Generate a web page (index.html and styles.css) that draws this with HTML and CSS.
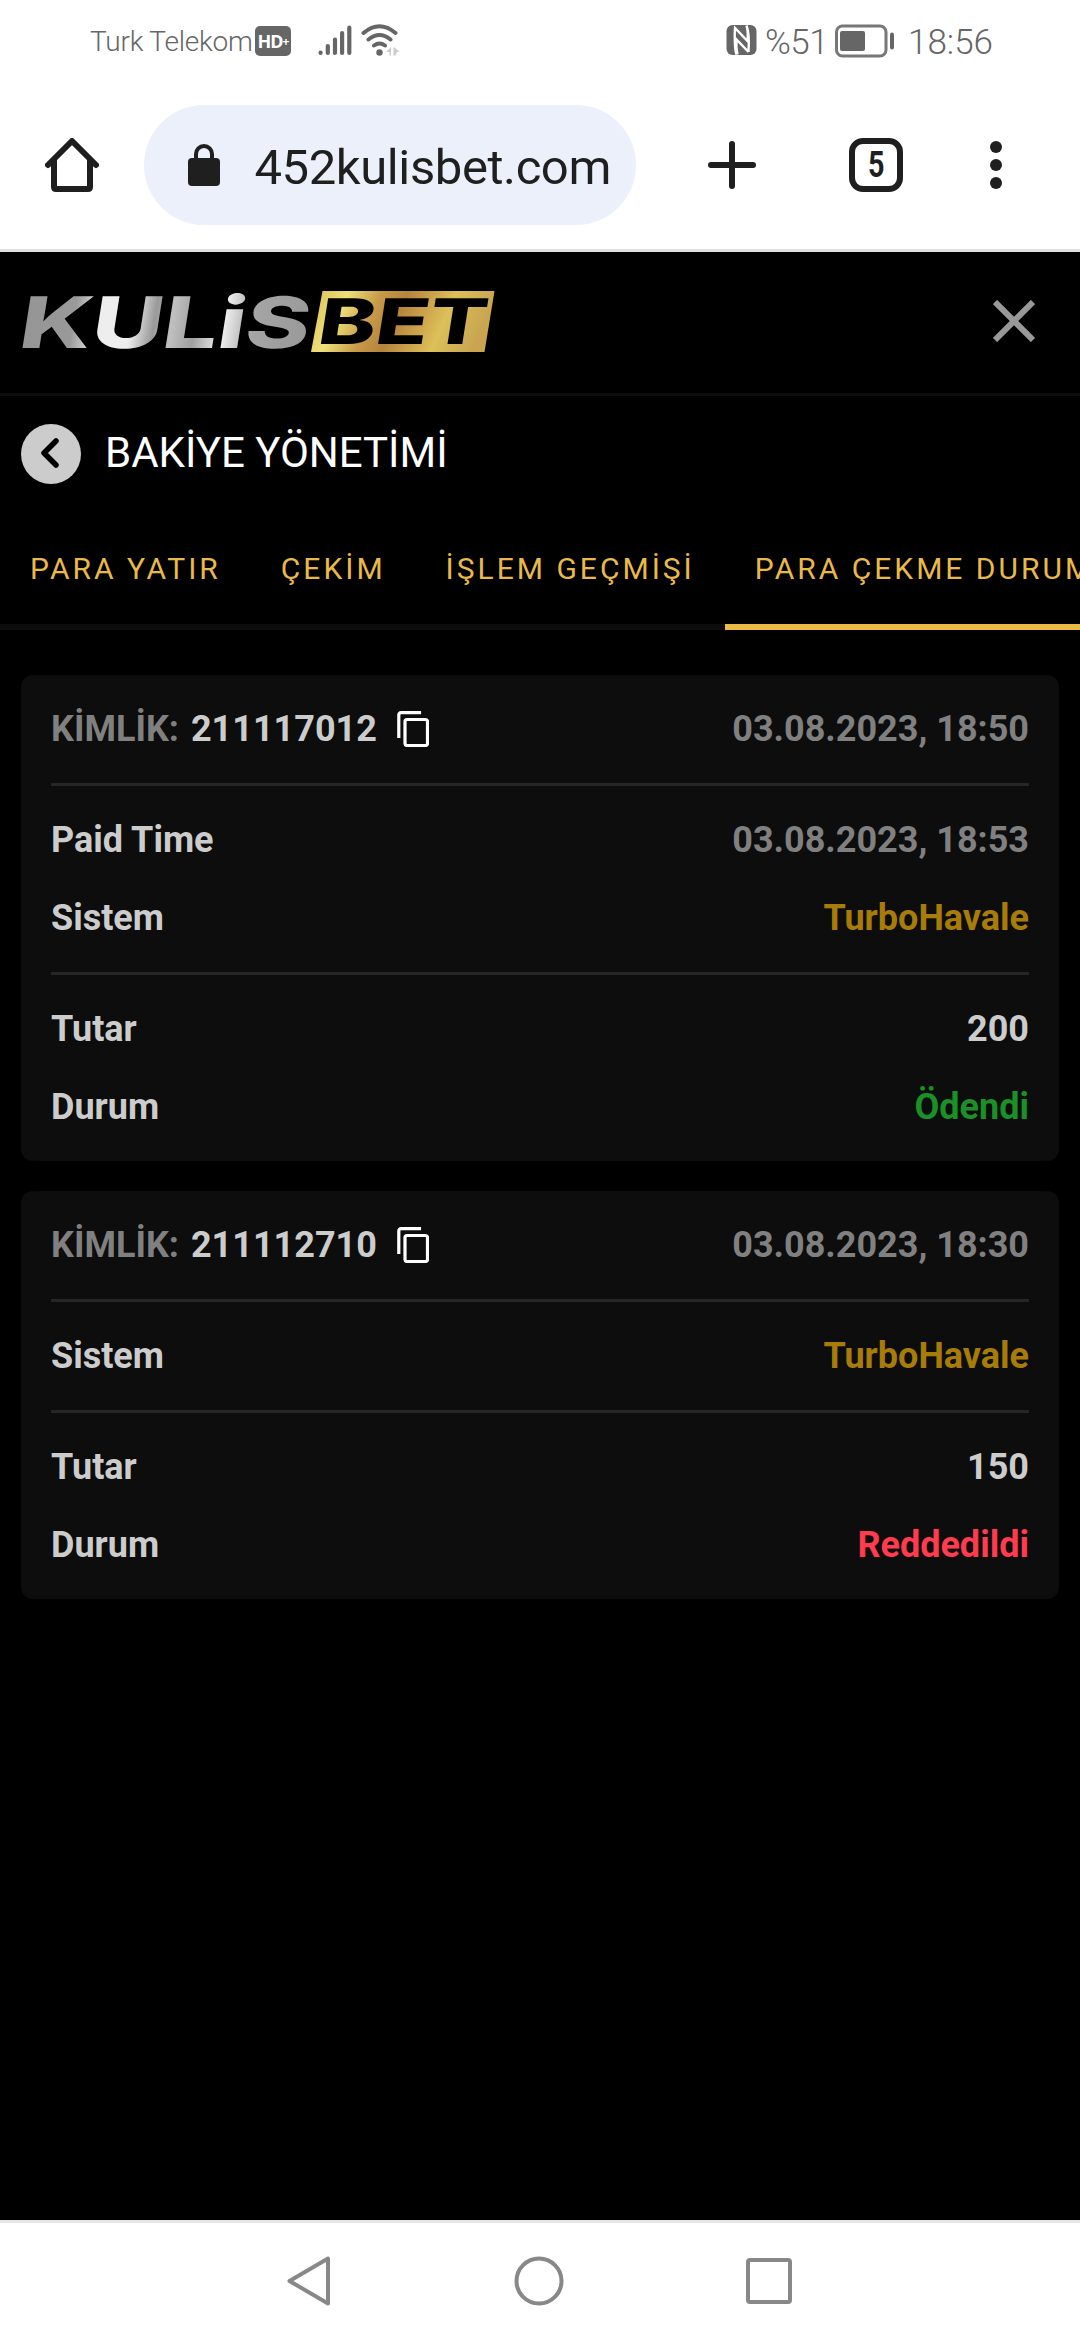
FILE: index.html
```html
<!DOCTYPE html>
<html lang="tr">
<head>
    <meta charset="UTF-8">
    <meta name="viewport" content="width=device-width, initial-scale=1.0">
    <title>Bakiye Yönetimi</title>
    <link rel="stylesheet" href="styles.css">
</head>
<body>

<div class="status-bar">
    <span class="carrier">Turk Telekom</span>
    <span class="hd-badge">HD<span class="hd-plus">+</span></span>
    <svg class="signal" width="34" height="32" viewBox="0 0 34 32" stroke="#666" stroke-width="4.2" stroke-linecap="round">
        <path d="M2.6 28.5v.5M9.8 22v7M17 15.500v13.500M24.100 9v20M31.300 3.500v25.500"/>
    </svg>
    <svg class="wifi" width="40" height="34" viewBox="0 0 40 34" fill="none" stroke="#666" stroke-width="4" stroke-linecap="round">
        <path d="M2.500 10Q18.500-3.500 34.500 10M7.500 16.500Q18.500 7.500 29.500 16.500M13 22.500Q18.500 18.500 24 22.500"/>
        <circle cx="18.500" cy="29.500" r="3.200" fill="#666" stroke="none"/>
        <path d="M25 29l5-5v8.500h-1.500V29zM32.500 24l6 4.500-2.500.5-1.500 3.500h-2z" fill="#ccc" stroke="none"/>
    </svg>
    <svg class="nfc" width="31" height="32" viewBox="0 0 31 32">
        <rect x="0.500" y="1" width="30" height="30" rx="6" fill="#666"/>
        <path d="M10.500 30.500C8.500 25 8.500 10 9 4l12.500 13C22 12 22 6 20.500 1.500M22.500 28L10.500 15.500C10 21 10.500 26 11.500 30.500M22.500 28c.5-8 .5-20-2-26.500" fill="none" stroke="#fff" stroke-width="2.400"/>
    </svg>
    <span class="percent">%51</span>
    <svg class="battery" width="60" height="34" viewBox="0 0 60 34">
        <rect x="1.500" y="2" width="49.500" height="30" rx="6" fill="none" stroke="#777" stroke-width="3"/>
        <rect x="5" y="7" width="25" height="20" rx="2" fill="#666"/>
        <rect x="55" y="8.500" width="4" height="17" rx="2" fill="#666"/>
    </svg>
    <span class="clock">18:56</span>
</div>

<div class="toolbar">
    <svg class="home" width="54" height="54" viewBox="0 0 54 54" fill="none" stroke="#1f1f1f" stroke-width="6" stroke-linecap="round" stroke-linejoin="round">
        <path d="M3 27L27 3l24 24M9 23v26q0 2 2 2h32q2 0 2-2V23"/>
    </svg>
    <div class="address">
        <svg class="lock" width="32" height="42" viewBox="0 0 32 42">
            <path d="M8 16v-6a8 8 0 0 1 16 0v6" fill="none" stroke="#1f1f1f" stroke-width="4"/>
            <rect y="14" width="32" height="28" rx="4" fill="#1f1f1f"/>
        </svg>
        <span class="url"><span class="url-text">.452kulisbet.com</span></span>
    </div>
    <svg class="plus" width="48" height="48" viewBox="0 0 48 48" stroke="#1f1f1f" stroke-width="6" stroke-linecap="round">
        <path d="M3 24h42M24 3v42"/>
    </svg>
    <span class="tab-count"><span class="tab-number">5</span></span>
    <svg class="menu" width="12" height="48" viewBox="0 0 12 48" fill="#1f1f1f">
        <circle cx="6" cy="6" r="6"/>
        <circle cx="6" cy="24" r="6"/>
        <circle cx="6" cy="42" r="6"/>
    </svg>
</div>

<div class="page">
    <div class="header">
        <svg class="logo" width="475" height="63" viewBox="0 0 475 63">
            <defs>
                <linearGradient id="silver" x1="0" y1="0" x2="1" y2="0">
                    <stop offset="0" stop-color="#959595"/>
                    <stop offset="0.180" stop-color="#999"/>
                    <stop offset="0.270" stop-color="#eee"/>
                    <stop offset="0.380" stop-color="#ededed"/>
                    <stop offset="0.460" stop-color="#999"/>
                    <stop offset="0.520" stop-color="#c0c0c0"/>
                    <stop offset="0.600" stop-color="#a0a0a0"/>
                    <stop offset="0.700" stop-color="#f0f0f0"/>
                    <stop offset="0.800" stop-color="#a5a5a5"/>
                    <stop offset="1" stop-color="#999"/>
                </linearGradient>
                <linearGradient id="gold" x1="0" y1="0" x2="1" y2="0.150">
                    <stop offset="0" stop-color="#d9bc55"/>
                    <stop offset="0.200" stop-color="#efe07a"/>
                    <stop offset="0.380" stop-color="#c79a48"/>
                    <stop offset="0.520" stop-color="#b5843d"/>
                    <stop offset="0.620" stop-color="#c79a48"/>
                    <stop offset="0.780" stop-color="#dcc058"/>
                    <stop offset="1" stop-color="#c9a552"/>
                </linearGradient>
            </defs>
            <text class="logo-text" transform="translate(-4 57.500) skewX(-9)" y="0" textLength="290" lengthAdjust="spacingAndGlyphs" fill="url(#silver)">KULiS</text>
            <path d="M301.500 1H473.500L463.500 62H290z" fill="url(#gold)"/>
            <text class="logo-text logo-bet" transform="translate(295 53.500) skewX(-9)" y="0" textLength="168" lengthAdjust="spacingAndGlyphs">BET</text>
        </svg>
        <svg class="close" width="42" height="42" viewBox="0 0 42 42" stroke="#999" stroke-width="6">
            <path d="M2 2l38 38M40 2L2 40"/>
        </svg>
    </div>

    <div class="title-row">
        <span class="back">
            <svg width="18" height="30" viewBox="0 0 18 30" fill="none" stroke="#000" stroke-width="5.500" stroke-linecap="round" stroke-linejoin="round">
                <path d="M15 3L3 15l12 12"/>
            </svg>
        </span>
        <h1 class="title">BAKİYE YÖNETİMİ</h1>
    </div>

    <div class="tabs">
        <span class="tab">PARA YATIR</span>
        <span class="tab">ÇEKİM</span>
        <span class="tab">İŞLEM GEÇMİŞİ</span>
        <span class="tab active">PARA ÇEKME DURUMU</span>
    </div>

    <div class="cards">
        <div class="card">
            <div class="section">
                <div class="row">
                    <div class="id">
                        <span class="muted">KİMLİK:</span>
                        <span class="number">211117012</span>
                        <svg class="copy" width="32" height="36" viewBox="0 0 32 36" fill="none" stroke="#fff" stroke-width="3.200">
                            <path d="M1.800 27V4q0-2.300 2.300-2.300h20"/>
                            <rect x="8" y="8.500" width="22.500" height="26" rx="2"/>
                        </svg>
                    </div>
                    <span class="muted">03.08.2023, 18:50</span>
                </div>
            </div>
            <div class="section">
                <div class="row">
                    <span>Paid Time</span>
                    <span class="muted">03.08.2023, 18:53</span>
                </div>
                <div class="row">
                    <span>Sistem</span>
                    <span class="system">TurboHavale</span>
                </div>
            </div>
            <div class="section">
                <div class="row">
                    <span>Tutar</span>
                    <span>200</span>
                </div>
                <div class="row">
                    <span>Durum</span>
                    <span class="paid">Ödendi</span>
                </div>
            </div>
        </div>

        <div class="card">
            <div class="section">
                <div class="row">
                    <div class="id">
                        <span class="muted">KİMLİK:</span>
                        <span class="number">211112710</span>
                        <svg class="copy" width="32" height="36" viewBox="0 0 32 36" fill="none" stroke="#fff" stroke-width="3.200">
                            <path d="M1.800 27V4q0-2.300 2.300-2.300h20"/>
                            <rect x="8" y="8.500" width="22.500" height="26" rx="2"/>
                        </svg>
                    </div>
                    <span class="muted">03.08.2023, 18:30</span>
                </div>
            </div>
            <div class="section">
                <div class="row">
                    <span>Sistem</span>
                    <span class="system">TurboHavale</span>
                </div>
            </div>
            <div class="section">
                <div class="row">
                    <span>Tutar</span>
                    <span>150</span>
                </div>
                <div class="row">
                    <span>Durum</span>
                    <span class="rejected">Reddedildi</span>
                </div>
            </div>
        </div>
    </div>
</div>

<div class="nav-bar">
    <svg width="44" height="50" viewBox="0 0 44 50" fill="none" stroke="#888" stroke-width="4" stroke-linejoin="round">
        <path d="M2.500 25L41 2.500v45z"/>
    </svg>
    <svg width="50" height="50" viewBox="0 0 50 50" fill="none" stroke="#888" stroke-width="4">
        <circle cx="25" cy="25" r="22.500"/>
    </svg>
    <svg width="46" height="46" viewBox="0 0 46 46" fill="none" stroke="#888" stroke-width="4">
        <rect x="2" y="2" width="42" height="42" rx="2"/>
    </svg>
</div>

</body>
</html>
```

FILE: styles.css
```css
* {
    box-sizing: border-box;
}
body {
    margin: 0;
    height: 2340px;
    display: flex;
    flex-direction: column;
    background: #fff;
    font-family: Roboto, sans-serif;
    overflow: hidden;
}
svg {
    display: block;
    flex: none;
}

/* phone status bar */
.status-bar {
    height: 84px;
    padding: 0 90px;
    display: flex;
    align-items: center;
    color: #666;
    white-space: nowrap;
}
.carrier {
    width: 165px;
    padding-bottom: 2px;
    font-size: 28px;
    font-weight: 300;
    letter-spacing: -0.2px;
}
.hd-badge {
    width: 36px;
    height: 30px;
    margin-top: -2px;
    display: flex;
    align-items: center;
    justify-content: center;
    border-radius: 5px;
    background: #666;
    color: #fff;
    font-family: "Noto Sans", sans-serif;
    font-size: 18px;
    font-weight: 700;
    letter-spacing: -1px;
}
.hd-plus {
    font-size: 12px;
}
.signal {
    margin-left: 27px;
    margin-top: -4px;
}
.wifi {
    margin-left: 9px;
    margin-top: -4px;
}
.nfc {
    margin-left: auto;
    margin-top: -4px;
}
.percent {
    width: 70px;
    margin-left: 8px;
    font-size: 35px;
    font-weight: 300;
    letter-spacing: -0.5px;
}
.battery {
    margin-top: -3px;
}
.clock {
    width: 82px;
    margin-left: 13px;
    font-size: 35px;
    font-weight: 300;
}

/* browser toolbar */
.toolbar {
    height: 168px;
    padding: 0 78px 3px 45px;
    display: flex;
    align-items: center;
    border-bottom: 3px solid #e0e0e0;
}
.address {
    width: 492px;
    height: 120px;
    margin-left: 45px;
    padding: 0 25px 0 44px;
    display: flex;
    align-items: center;
    border-radius: 60px;
    background: #ebf0fa;
}
.url {
    width: 359px;
    margin-left: 32px;
    padding-top: 4px;
    display: flex;
    justify-content: flex-end;
    overflow: hidden;
    color: #1f1f1f;
    font-size: 49px;
    letter-spacing: -0.4px;
    white-space: nowrap;
}
.plus {
    margin-left: 72px;
}
.tab-count {
    width: 54px;
    height: 54px;
    margin-left: 93px;
    display: flex;
    align-items: center;
    justify-content: center;
    border: 6px solid #1f1f1f;
    border-radius: 14px;
    color: #1f1f1f;
    font-size: 36px;
    font-weight: 700;
}
.tab-number {
    transform: scaleX(0.8);
}
.menu {
    margin-left: 87px;
}

/* site */
.page {
    flex: 1;
    background: #000;
    color: #ccc;
}
.header {
    height: 144px;
    padding: 0 45px 3px 21px;
    display: flex;
    align-items: center;
    justify-content: space-between;
    border-bottom: 3px solid #0d0d0d;
}
.logo {
    overflow: visible;
}
.logo-text {
    font-family: Inter, sans-serif;
    font-size: 71px;
    font-weight: 800;
}
.logo-bet {
    font-size: 63px;
}
.title-row {
    height: 117px;
    padding: 0 21px 2px;
    display: flex;
    align-items: center;
    gap: 24px;
}
.back {
    width: 60px;
    height: 60px;
    padding-right: 2px;
    padding-bottom: 2px;
    display: flex;
    align-items: center;
    justify-content: center;
    border-radius: 50%;
    background: #ccc;
}
.title {
    margin: 0 0 2px;
    color: #fff;
    font-size: 42px;
    font-weight: 400;
}
.tabs {
    height: 117px;
    display: flex;
    overflow: hidden;
    box-shadow: inset 0 -6px #0d0d0d;
}
.tab {
    flex: none;
    padding: 0 30px;
    color: #e9b949;
    font-size: 30px;
    line-height: 111px;
    letter-spacing: 3px;
    white-space: nowrap;
}
.tab.active {
    border-bottom: 6px solid #ebbb46;
}
.cards {
    padding: 45px 21px;
    display: flex;
    flex-direction: column;
    gap: 30px;
}
.card {
    padding: 0 30px;
    border-radius: 12px;
    background: #0d0d0d;
    font-size: 36px;
    font-weight: 700;
}
.section {
    padding: 30px 0;
    display: flex;
    flex-direction: column;
    gap: 30px;
}
.section + .section {
    border-top: 3px solid #262626;
}
.row {
    height: 48px;
    display: flex;
    align-items: center;
    justify-content: space-between;
    line-height: 48px;
}
.id {
    display: flex;
    align-items: center;
}
.number {
    margin: 0 20px 0 12px;
}
.muted {
    color: #808080;
}
.system {
    color: #a87c08;
}
.paid {
    color: #1a9026;
}
.rejected {
    color: #ff3b4e;
}

/* phone navigation */
.nav-bar {
    height: 120px;
    padding: 0 288px 2px 287px;
    display: flex;
    align-items: center;
    justify-content: space-between;
    border-top: 3px solid #e6e6e6;
}
```
